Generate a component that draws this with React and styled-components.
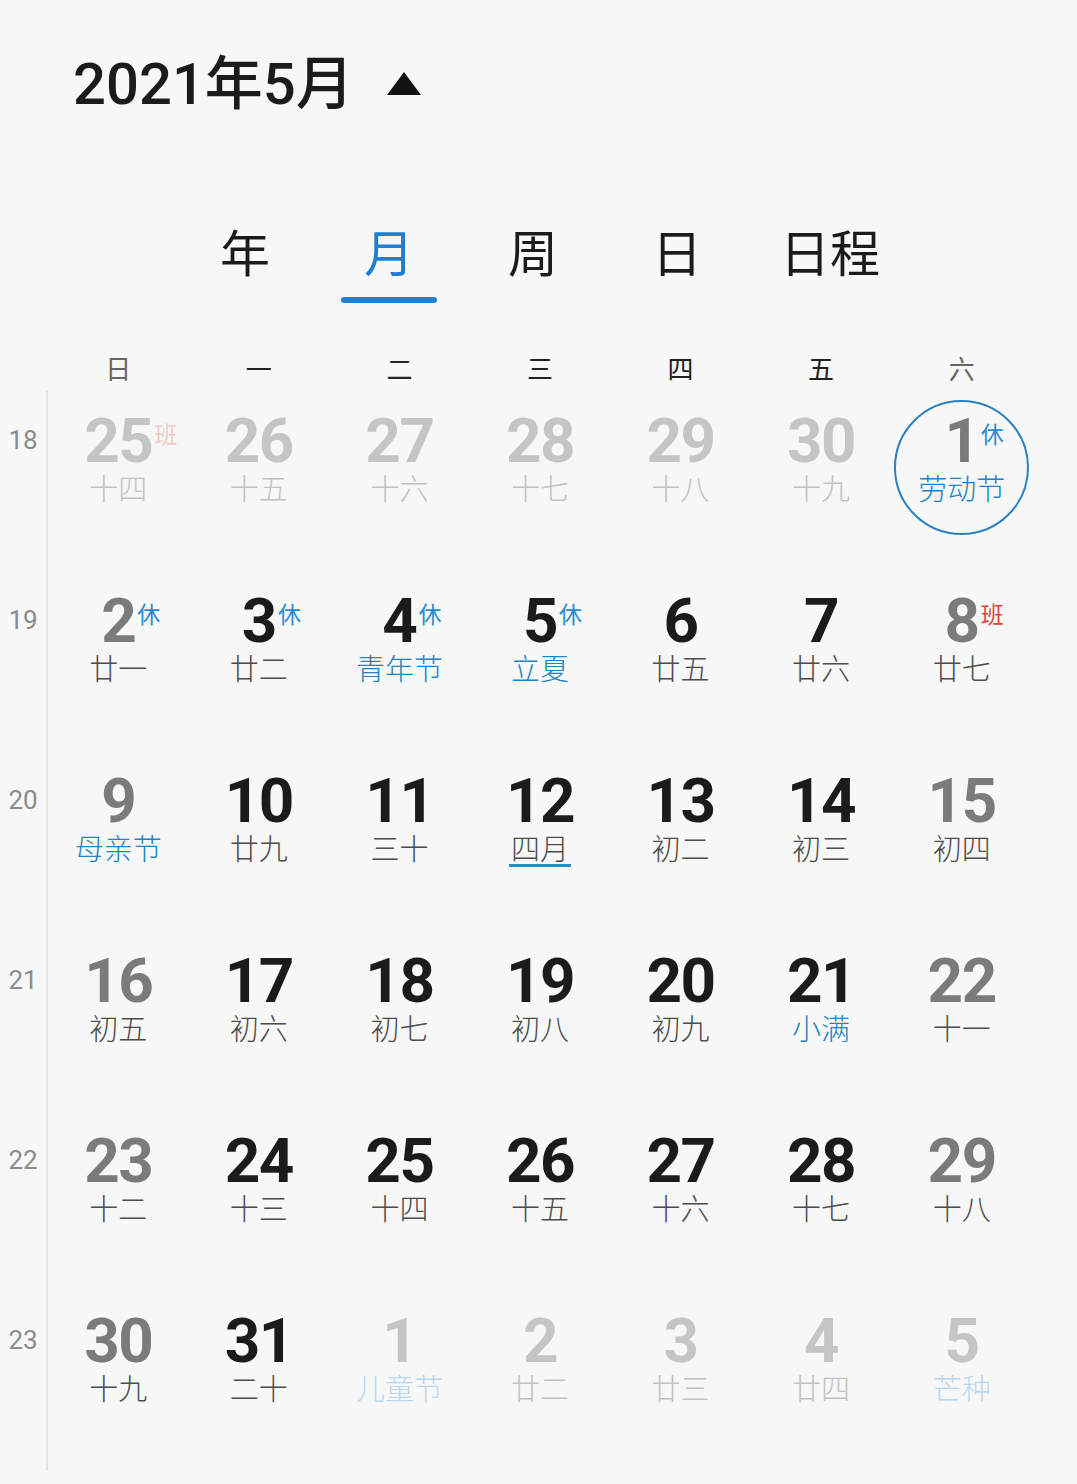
import React from "react";
import styled, { createGlobalStyle } from "styled-components";

const GlobalStyle = createGlobalStyle`
  html, body {
    margin: 0;
    padding: 0;
    background: #f7f7f7;
  }
  * {
    box-sizing: border-box;
  }
`;

const CJK = `"Noto Sans CJK SC", "Noto Sans", sans-serif`;
const NUM = `Roboto, "Noto Sans CJK SC", sans-serif`;

const weekdays = ["日", "一", "二", "三", "四", "五", "六"];
const tabs = ["年", "月", "周", "日", "日程"];

// out = outside the month; fest = festival text
const weeks = [
  {
    no: 18,
    days: [
      { d: 25, l: "十四", out: true, badge: "班" },
      { d: 26, l: "十五", out: true },
      { d: 27, l: "十六", out: true },
      { d: 28, l: "十七", out: true },
      { d: 29, l: "十八", out: true },
      { d: 30, l: "十九", out: true },
      { d: 1, l: "劳动节", fest: true, badge: "休", selected: true },
    ],
  },
  {
    no: 19,
    days: [
      { d: 2, l: "廿一", badge: "休" },
      { d: 3, l: "廿二", badge: "休" },
      { d: 4, l: "青年节", fest: true, badge: "休" },
      { d: 5, l: "立夏", fest: true, badge: "休" },
      { d: 6, l: "廿五" },
      { d: 7, l: "廿六" },
      { d: 8, l: "廿七", badge: "班" },
    ],
  },
  {
    no: 20,
    days: [
      { d: 9, l: "母亲节", fest: true },
      { d: 10, l: "廿九" },
      { d: 11, l: "三十" },
      { d: 12, l: "四月", marked: true },
      { d: 13, l: "初二" },
      { d: 14, l: "初三" },
      { d: 15, l: "初四" },
    ],
  },
  {
    no: 21,
    days: [
      { d: 16, l: "初五" },
      { d: 17, l: "初六" },
      { d: 18, l: "初七" },
      { d: 19, l: "初八" },
      { d: 20, l: "初九" },
      { d: 21, l: "小满", fest: true },
      { d: 22, l: "十一" },
    ],
  },
  {
    no: 22,
    days: [
      { d: 23, l: "十二" },
      { d: 24, l: "十三" },
      { d: 25, l: "十四" },
      { d: 26, l: "十五" },
      { d: 27, l: "十六" },
      { d: 28, l: "十七" },
      { d: 29, l: "十八" },
    ],
  },
  {
    no: 23,
    days: [
      { d: 30, l: "十九" },
      { d: 31, l: "二十" },
      { d: 1, l: "儿童节", out: true, fest: true },
      { d: 2, l: "廿二", out: true },
      { d: 3, l: "廿三", out: true },
      { d: 4, l: "廿四", out: true },
      { d: 5, l: "芒种", out: true, fest: true },
    ],
  },
];

const Page = styled.div`
  width: 1077px;
  min-height: 1484px;
  background: #f7f7f7;
  overflow: hidden;
`;

const Header = styled.div`
  height: 168px;
  padding-left: 73px;
  display: flex;
  align-items: center;
  gap: 33px;
`;

const Title = styled.h1`
  margin: 0;
  font-family: ${NUM};
  font-size: 58px;
  font-weight: 500;
  line-height: 1;
  color: #1b1b1b;
`;

const Tabs = styled.div`
  display: flex;
  padding-left: 173px;
`;

const Tab = styled.div`
  position: relative;
  width: ${(p) => (p.$wide ? 162 : 144)}px;
  padding-top: 52px;
  height: 135px;
  text-align: center;
  font-family: ${CJK};
  font-size: 50px;
  line-height: 60px;
  color: ${(p) => (p.$active ? "#1f80d2" : "#1b1b1b")};

  &::after {
    content: "";
    display: ${(p) => (p.$active ? "block" : "none")};
    position: absolute;
    left: 50%;
    top: 129px;
    width: 96px;
    height: 6px;
    margin-left: -48px;
    border-radius: 3px;
    background: #1f80d2;
  }
`;

const WeekdayRow = styled.div`
  display: grid;
  grid-template-columns: repeat(7, 140.57px);
  margin-left: 48px;
  margin-top: 42px;
  height: 46px;
`;

const Weekday = styled.div`
  text-align: center;
  font-family: ${CJK};
  font-size: 26px;
  line-height: 46px;
  color: ${(p) => (p.$weekend ? "#666" : "#222")};
`;

const Grid = styled.div`
  display: grid;
  grid-template-columns: 48px repeat(7, 140.57px);
`;

const WeekNo = styled.div`
  height: 180px;
  border-right: 2px solid #e3e3e3;
  padding-top: 33px;
  text-align: center;
  font-family: ${NUM};
  font-size: 26px;
  line-height: 32px;
  color: #8c8c8c;
`;

const Cell = styled.div`
  position: relative;
  height: 180px;
  padding-top: 21px;
  display: flex;
  flex-direction: column;
  align-items: center;
`;

const Ring = styled.div`
  position: absolute;
  left: 50%;
  top: 9px;
  width: 135px;
  height: 135px;
  margin-left: -68px;
  border: 2.5px solid #2a80c2;
  border-radius: 50%;
`;

const Num = styled.div`
  position: relative;
  font-family: ${NUM};
  font-size: 62px;
  font-weight: 700;
  line-height: 58px;
  letter-spacing: -1.5px;
  color: ${(p) => (p.$out ? "#c5c5c5" : p.$weekend ? "#7b7b7b" : "#1b1b1b")};
`;

const Badge = styled.span`
  position: absolute;
  left: 100%;
  top: 9px;
  margin-left: 2px;
  font-family: ${CJK};
  font-size: 23px;
  font-weight: 400;
  line-height: 24px;
  letter-spacing: 0;
  white-space: nowrap;
  color: ${(p) =>
    p.$kind === "班"
      ? p.$out
        ? "#f3c9c9"
        : "#d8463d"
      : p.$out
      ? "#b9d7ee"
      : "#2a8ccc"};
`;

const Lunar = styled.div`
  font-family: ${CJK};
  font-size: 29px;
  font-weight: 300;
  line-height: 34px;
  padding: 0 2px;
  white-space: nowrap;
  border-bottom: 3px solid
    ${(p) => (p.$marked ? "#1d8fc4" : "transparent")};
  color: ${(p) =>
    p.$fest
      ? p.$out
        ? "#b9d7ee"
        : "#2283c3"
      : p.$out
      ? "#c2c2c2"
      : "#4c4c4c"};
`;

const Triangle = () => (
  <svg width="34" height="24" viewBox="0 0 34 24">
    <polygon points="17,0 34,23 0,23" fill="#111" />
  </svg>
);

const DayCell = ({ day, weekend }) => (
  <Cell>
    {day.selected && <Ring />}
    <Num $out={day.out} $weekend={weekend}>
      {day.d}
      {day.badge && (
        <Badge $kind={day.badge} $out={day.out}>
          {day.badge}
        </Badge>
      )}
    </Num>
    <Lunar $fest={day.fest} $out={day.out} $marked={day.marked}>
      {day.l}
    </Lunar>
  </Cell>
);

export default function App() {
  return (
    <Page>
      <GlobalStyle />
      <Header>
        <Title>2021年5月</Title>
        <Triangle />
      </Header>
      <Tabs>
        {tabs.map((t, i) => (
          <Tab key={t} $active={i === 1} $wide={t.length > 1}>
            {t}
          </Tab>
        ))}
      </Tabs>
      <WeekdayRow>
        {weekdays.map((w, i) => (
          <Weekday key={w} $weekend={i === 0 || i === 6}>
            {w}
          </Weekday>
        ))}
      </WeekdayRow>
      <Grid>
        {weeks.map((wk) => (
          <React.Fragment key={wk.no}>
            <WeekNo>{wk.no}</WeekNo>
            {wk.days.map((day, i) => (
              <DayCell key={i} day={day} weekend={i === 0 || i === 6} />
            ))}
          </React.Fragment>
        ))}
      </Grid>
    </Page>
  );
}
